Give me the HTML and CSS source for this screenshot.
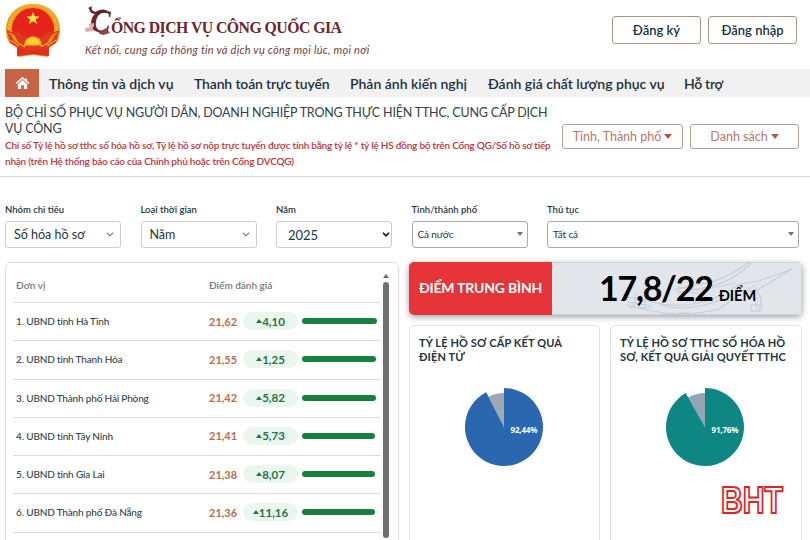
FILE: index.html
```html
<!DOCTYPE html>
<html lang="vi">
<head>
<meta charset="utf-8">
<title>Cổng Dịch vụ công Quốc gia</title>
<link rel="stylesheet" href="styles.css">
</head>
<body>
<header class="header">
  <svg class="emblem" viewBox="0 0 56 56">
    <path d="M28 1C12 1 1 12 1 27c0 6 1 9 4 13l7 5 1 9 15-2 15 2 1-9 7-5c3-4 4-7 4-13C55 12 44 1 28 1z" fill="#ea9a22"/>
    <circle cx="28" cy="26" r="24" fill="none" stroke="#f6b72a" stroke-width="2.500" stroke-dasharray="2 1"/>
    <circle cx="28" cy="26" r="21" fill="#e5231b"/>
    <path d="M28 9l1.700 4.300 4.800.2-3.700 2.900 1.300 4.500L28 18.300l-4.100 2.600 1.300-4.500-3.700-2.900 4.800-.2z" fill="#ffe34a"/>
    <path d="M2 27l7 3 5-2 4 5 5 2 1 4h8l1-4 5-2 4-5 5 2 7-3-3 13-7 4 0 9-16-2-16 2 0-9-7-4z" fill="#df3a1c"/>
    <path d="M4 30l5 3 4 7 7 4M52 30l-5 3-4 7-7 4M5 37l9 6M51 37l-9 6M7 33l4 6M49 33l-4 6M13 52l15-2 15 2" fill="none" stroke="#f2a326" stroke-width="1.300"/>
    <path d="M20 42a8 8 0 0116 0z" fill="#f9d133" stroke="#f4a923" stroke-width="2" stroke-dasharray="2 1"/>
    <path d="M13 45q15 6 30 0l0 8-15-2-15 2z" fill="#e42a1c"/>
  </svg>
  <div class="brand">
    <div class="brand-title">
      <span class="dropcap">C<svg class="bird" viewBox="0 0 28 30">
        <path d="M4 18l5-1v4l-4 1zM0 22l8-1v4l-7 1z" fill="#dbaaa0"/>
        <path d="M5 2q1 5 6 5 7-4 11-1" fill="none" stroke="#5d2026" stroke-width="2.200"/>
        <path d="M3 2l4-2-1 4z" fill="#5d2026"/>
        <path d="M13 27l8-5 4 5-7 2z" fill="#8e4642"/>
      </svg></span><span class="brand-rest">ỔNG DỊCH VỤ CÔNG QUỐC GIA</span>
    </div>
    <div class="slogan">Kết nối, cung cấp thông tin và dịch vụ công mọi lúc, mọi nơi</div>
  </div>
  <div class="auth"><button class="auth-btn signup">Đăng ký</button><button class="auth-btn signin">Đăng nhập</button></div>
</header>
<nav class="nav">
  <a class="home"><svg viewBox="0 0 16 14" width="15" height="13"><path d="M1 7l7-6 7 6M12 1.500v3" fill="none" stroke="#fff" stroke-width="1.600"/><path d="M3 7.500l5-4.300 5 4.300V13H9.500V9h-3v4H3z" fill="#fff"/></svg></a>
  <a class="n1">Thông tin và dịch vụ</a><a class="n2">Thanh toán trực tuyến</a><a class="n3">Phản ánh kiến nghị</a><a class="n4">Đánh giá chất lượng phục vụ</a><a class="n5">Hỗ trợ</a>
</nav>
<section class="intro">
  <div class="intro-text">
    <h1>BỘ CHỈ SỐ PHỤC VỤ NGƯỜI DÂN, DOANH NGHIỆP TRONG THỰC HIỆN TTHC, CUNG CẤP DỊCH<br>VỤ CÔNG</h1>
    <p>Chỉ số Tỷ lệ hồ sơ tthc số hóa hồ sơ, Tỷ lệ hồ sơ nộp trực tuyến được tính bằng tỷ lệ * tỷ lệ HS đồng bộ trên Cổng QG/Số hồ sơ tiếp<br>nhận (trên Hệ thống báo cáo của Chính phủ hoặc trên Cổng DVCQG)</p>
  </div>
  <div class="scope">
    <button class="scope-btn province"><span>Tỉnh, Thành phố</span><i class="caret"></i></button>
    <button class="scope-btn list"><span>Danh sách</span><i class="caret"></i></button>
  </div>
</section>
<section class="filters">
  <div class="filter"><label>Nhóm chỉ tiêu</label><div class="select big"><span>Số hóa hồ sơ</span><svg width="8" height="5" viewBox="0 0 8 5"><path d="M1 .8l3 3 3-3" /></svg></div></div>
  <div class="filter"><label>Loại thời gian</label><div class="select big"><span>Năm</span><svg width="8" height="5" viewBox="0 0 8 5"><path d="M1 .8l3 3 3-3" /></svg></div></div>
  <div class="filter"><label>Năm</label><div class="select big year"><span>2025</span><svg width="8" height="5" viewBox="0 0 8 5"><path d="M1 .8l3 3 3-3" /></svg></div></div>
  <div class="filter"><label>Tỉnh/thành phố</label><div class="select small"><span>Cả nước</span><i class="caret"></i></div></div>
  <div class="filter"><label>Thủ tục</label><div class="select small"><span>Tất cả</span><i class="caret"></i></div></div>
</section>
<main class="main">
  <section class="ranking">
    <div class="rows">
      <div class="row head"><span>Đơn vị</span><span class="head-score">Điểm đánh giá</span></div>
      <div class="row"><span class="unit">1. UBND tỉnh Hà Tĩnh</span><b>21,62</b><span class="pill"><i></i>4,10</span><span class="bar" style="width:75px"></span></div>
      <div class="row"><span class="unit">2. UBND tỉnh Thanh Hóa</span><b>21,55</b><span class="pill"><i></i>1,25</span><span class="bar" style="width:74px"></span></div>
      <div class="row"><span class="unit">3. UBND Thành phố Hải Phòng</span><b>21,42</b><span class="pill"><i></i>5,82</span><span class="bar" style="width:74px"></span></div>
      <div class="row"><span class="unit">4. UBND tỉnh Tây Ninh</span><b>21,41</b><span class="pill"><i></i>5,73</span><span class="bar" style="width:73px"></span></div>
      <div class="row"><span class="unit">5. UBND tỉnh Gia Lai</span><b>21,38</b><span class="pill"><i></i>8,07</span><span class="bar" style="width:73px"></span></div>
      <div class="row"><span class="unit">6. UBND Thành phố Đà Nẵng</span><b>21,36</b><span class="pill"><i></i>11,16</span><span class="bar" style="width:73px"></span></div>
    </div>
    <div class="scroll"><i></i><div class="thumb"></div></div>
  </section>
  <section class="summary">
    <div class="score">
      <div class="score-label">ĐIỂM TRUNG BÌNH</div>
      <div class="score-value">
        <svg class="pattern" viewBox="0 0 250 52"><g fill="none" stroke="#c6ced6" stroke-width="1.200"><path d="M196 0q-26 19-49 21l-25 6M199 0q-20 21-49 25l-24 5M76 34l24 5q30 8 61-3l27-15 19-3 33-12-33 20-18 5-22 15q-33 9-68 2l-24-6M76 39l24 4M77 44l22 1M84 31l-2 13M89 32l-2 14M94 34l-2 13M108 42q31 8 65-7M125 24l25 3 34-7M125 28l25 3M196 24l6 9 3 12M201 22l7 11 2 12M190 30l16 6M127 50h10M199 42h9v6h-8z"/></g></svg>
        <span class="score-number">17,8/22</span><span class="score-unit">ĐIỂM</span>
      </div>
    </div>
    <div class="charts">
      <div class="chart"><h2>TỶ LỆ HỒ SƠ CẤP KẾT QUẢ<br>ĐIỆN TỬ</h2>
        <svg class="pie" width="80" height="80" viewBox="-40 -40 80 80"><path d="M0 0L-15.500-30.300A34 34 0 010-34z" fill="#9ba9b2"/><path d="M0 0V-39A39 39 0 11-17.800-34.700z" fill="#2b67af"/><text x="6.500" y="5.500" textLength="27">92,44%</text></svg>
      </div>
      <div class="chart second"><h2>TỶ LỆ HỒ SƠ TTHC SỐ HÓA HỒ<br>SƠ, KẾT QUẢ GIẢI QUYẾT TTHC</h2>
        <svg class="pie" width="80" height="80" viewBox="-40 -40 80 80"><path d="M0 0L-16.800-29.500A34 34 0 010-34z" fill="#95a5b2"/><path d="M0 0V-39A39 39 0 11-19.300-33.900z" fill="#0e8784"/><text x="6.500" y="5.500" textLength="27">91,76%</text></svg>
      </div>
    </div>
  </section>
</main>
<svg class="watermark" viewBox="0 0 84 54"><text x="11" y="38" textLength="62" lengthAdjust="spacingAndGlyphs">BHT</text></svg>
</body>
</html>
```
FILE: styles.css
```css
* { box-sizing: border-box; }
body { margin: 0; width: 810px; height: 540px; overflow: hidden; position: relative; background: #fff; color: #243540; font-family: Lato, "Noto Sans", sans-serif; white-space: nowrap; }
button { font-family: inherit; padding: 0; background: #fff; }
.header { height: 69px; display: flex; padding-left: 5px; }
.emblem { width: 56px; height: 56px; margin-top: 3px; flex: none; }
.brand { margin-left: 24px; width: 300px; }
.brand-title { height: 38px; display: flex; align-items: flex-end; color: #70242a; font-family: "Liberation Serif", serif; font-weight: bold; font-size: 15.800px; letter-spacing: -.55px; }
.dropcap { position: relative; width: 26px; padding-left: 5px; font-size: 31px; line-height: 32px; font-style: italic; }
.bird { position: absolute; left: 0; top: 0; width: 28px; height: 30px; }
.brand-rest { line-height: 21px; }
.slogan { margin-top: 4px; font-size: 11px; line-height: 16px; font-style: italic; color: #73413e; letter-spacing: .26px; }
.auth { margin: 16px 13px 0 auto; display: flex; gap: 7px; height: 28px; }
.auth-btn { width: 89px; height: 28px; border: 1px solid #ae9484; border-radius: 3px; color: #203141; font-size: 13px; font-weight: 600; }
.nav { height: 28px; background: #f1f1f1; display: flex; align-items: center; font-size: 14px; font-weight: 600; color: #1d303a; padding-left: 5px; }
.home { width: 34px; height: 28px; background: #c66444; display: flex; justify-content: center; align-items: center; margin-right: 10px; }
.n1 { width: 145px; }
.n2 { width: 156px; letter-spacing: -.15px; }
.n3 { width: 138px; }
.n4 { width: 196px; }
.n5 { letter-spacing: -.3px; }
.intro { height: 80px; border-bottom: 1px solid #d4d6d7; display: flex; padding-left: 5px; }
.intro-text { width: 557px; padding-top: 8px; }
h1 { font-size: 12.500px; line-height: 16px; font-weight: 400; margin: 0; color: #344149; letter-spacing: -.19px; }
.intro p { margin: 0; font-size: 10px; line-height: 16px; color: #bd333b; font-weight: 600; letter-spacing: -.21px; }
.scope { display: flex; gap: 7px; padding-top: 27px; }
.scope-btn { height: 25px; border: 1px solid #b99d90; border-radius: 3px; color: #b37a67; font-size: 12.500px; display: flex; align-items: center; justify-content: center; gap: 3px; }
.province { width: 121px; }
.list { width: 109px; }
.caret { border: 4px solid transparent; border-top: 5px solid #b65b43; border-bottom: 0; }
.filters { height: 85px; padding: 25px 11px 0 5px; display: grid; grid-template-columns: 116px 116px 116px 116px 252px; column-gap: 19.500px; }
.filter label { display: block; height: 19px; line-height: 16px; font-size: 9.500px; font-weight: 600; }
.select { height: 27px; border: 1px solid #c8ced2; border-radius: 3px; display: flex; align-items: center; justify-content: space-between; padding: 0 6px 1px 8px; }
.big { font-size: 12.500px; }
.select svg { fill: none; stroke: #65717a; stroke-width: 1.100; }
.year { padding: 0 1px 0 11px; font-size: 13px; }
.year svg { stroke: #111; stroke-width: 1.600; }
.small { font-size: 10px; letter-spacing: -.15px; border-color: #aaa; padding: 0 4px 1px 5px; }
.small .caret { border-width: 4px 3px 0; border-top-color: #6d7479; }
.main { height: 278px; padding: 0 8px 0 5px; display: flex; gap: 10px; }
.ranking { width: 394px; height: 290px; border: 1px solid #dde0e2; border-radius: 6px; display: flex; padding-left: 7px; }
.rows { width: 368px; }
.row { height: 38.250px; border-bottom: 1px solid #dedede; display: flex; align-items: center; padding: 0 0 1px 3px; color: #37444b; }
.head { height: 40px; padding-top: 6px; font-size: 10px; font-weight: 600; color: #76797b; }
.head > span:first-child { width: 193px; }
.unit { width: 193px; font-size: 10px; font-weight: 500; letter-spacing: -.17px; }
.row b { width: 34px; font-size: 11px; color: #bb6c50; }
.pill { width: 55px; height: 18px; border-radius: 9px; background: #ebf6ef; color: #1c7947; font-size: 11.500px; font-weight: 700; display: flex; align-items: center; justify-content: center; }
.pill i { border: 3px solid transparent; border-top: 0; border-bottom: 4px solid #1c7947; }
.bar { height: 6px; border-radius: 3px; background: #18803e; margin-left: 4px; }
.scroll { width: 10px; padding: 11px 0 0 2px; }
.scroll i { display: block; width: 6px; border: 3px solid transparent; border-top: 0; border-bottom: 4px solid #6c6c6c; }
.thumb { width: 6px; height: 256px; margin-top: 4px; border-radius: 3px; background: #707070; }
.summary { width: 393px; }
.score { height: 53px; border-radius: 5px; overflow: hidden; display: flex; box-shadow: 0 2px 6px #9aa0a6; }
.score-label { width: 143px; background: #e73438; color: #fff; font-size: 14px; font-weight: 700; letter-spacing: -.2px; display: flex; align-items: center; justify-content: center; padding-bottom: 2px; }
.score-value { width: 250px; position: relative; background: #e2e6eb; color: #000; padding-left: 47px; font-weight: 700; border: 1px solid #ccd2d9; border-left: 0; }
.pattern { position: absolute; left: 0; top: 0; width: 250px; height: 52px; }
.score-number { position: relative; font-size: 34px; line-height: 49px; letter-spacing: -1.250px; }
.score-unit { position: relative; font-size: 14.500px; margin-left: 6px; }
.charts { display: flex; gap: 10px; margin-top: 10px; }
.chart { width: 191px; height: 230px; border: 1px solid #dde2e5; border-radius: 5px; }
.chart.second { width: 192px; }
h2 { font-size: 11px; line-height: 14px; font-weight: 700; letter-spacing: .12px; margin: 10px 0 0 9px; color: #26343d; }
.pie { display: block; margin: 23px 0 0 54px; }
.pie text { fill: #fff; font: 700 8px "Noto Sans", sans-serif; }
.watermark { position: absolute; left: 710px; top: 475px; width: 84px; height: 54px; }
.watermark text { font: 700 36px "Liberation Sans", sans-serif; fill: #fff; stroke: #dd2329; stroke-width: 2; }
```
